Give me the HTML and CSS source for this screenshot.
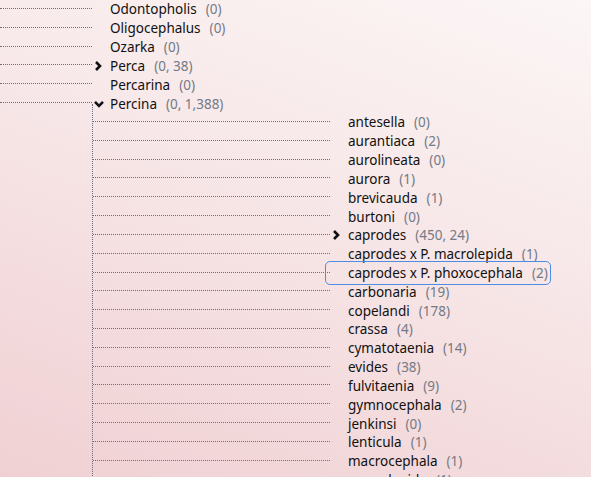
FILE: index.html
```html
<!DOCTYPE html>
<html lang="en">
<head>
    <meta charset="UTF-8">
    <title>Percidae</title>
    <link rel="stylesheet" href="styles.css">
</head>
<body>
    <ul class="tree">
        <li class="row"><span class="wire"></span><span class="node"><span class="toggle"></span><span class="name">Odontopholis</span><span class="count">(0)</span></span></li>
        <li class="row"><span class="wire"></span><span class="node"><span class="toggle"></span><span class="name">Oligocephalus</span><span class="count">(0)</span></span></li>
        <li class="row"><span class="wire"></span><span class="node"><span class="toggle"></span><span class="name">Ozarka</span><span class="count">(0)</span></span></li>
        <li class="row"><span class="wire"></span><span class="node"><span class="toggle"><svg width="12" height="10" viewBox="0 0 12 10"><path d="M4 1 L8 5 L4 9" /></svg></span><span class="name">Perca</span><span class="count">(0, 38)</span></span></li>
        <li class="row"><span class="wire"></span><span class="node"><span class="toggle"></span><span class="name">Percarina</span><span class="count">(0)</span></span></li>
        <li class="branch">
            <div class="row"><span class="wire"></span><span class="node"><span class="toggle"><svg width="14" height="10" viewBox="0 0 14 10"><path d="M3 2.8 L7 6.8 L11 2.8" /></svg></span><span class="name">Percina</span><span class="count">(0, 1,388)</span></span></div>
            <ul class="children">
                <li class="row"><span class="wire"></span><span class="node"><span class="toggle"></span><span class="name">antesella</span><span class="count">(0)</span></span></li>
                <li class="row"><span class="wire"></span><span class="node"><span class="toggle"></span><span class="name">aurantiaca</span><span class="count">(2)</span></span></li>
                <li class="row"><span class="wire"></span><span class="node"><span class="toggle"></span><span class="name">aurolineata</span><span class="count">(0)</span></span></li>
                <li class="row"><span class="wire"></span><span class="node"><span class="toggle"></span><span class="name">aurora</span><span class="count">(1)</span></span></li>
                <li class="row"><span class="wire"></span><span class="node"><span class="toggle"></span><span class="name">brevicauda</span><span class="count">(1)</span></span></li>
                <li class="row"><span class="wire"></span><span class="node"><span class="toggle"></span><span class="name">burtoni</span><span class="count">(0)</span></span></li>
                <li class="row"><span class="wire"></span><span class="node"><span class="toggle"><svg width="12" height="10" viewBox="0 0 12 10"><path d="M4 1 L8 5 L4 9" /></svg></span><span class="name">caprodes</span><span class="count">(450, 24)</span></span></li>
                <li class="row"><span class="wire"></span><span class="node"><span class="toggle"></span><span class="name">caprodes x P. macrolepida</span><span class="count">(1)</span></span></li>
                <li class="row"><span class="wire"></span><span class="node selected"><span class="toggle"></span><span class="name">caprodes x P. phoxocephala</span><span class="count">(2)</span></span></li>
                <li class="row"><span class="wire"></span><span class="node"><span class="toggle"></span><span class="name">carbonaria</span><span class="count">(19)</span></span></li>
                <li class="row"><span class="wire"></span><span class="node"><span class="toggle"></span><span class="name">copelandi</span><span class="count">(178)</span></span></li>
                <li class="row"><span class="wire"></span><span class="node"><span class="toggle"></span><span class="name">crassa</span><span class="count">(4)</span></span></li>
                <li class="row"><span class="wire"></span><span class="node"><span class="toggle"></span><span class="name">cymatotaenia</span><span class="count">(14)</span></span></li>
                <li class="row"><span class="wire"></span><span class="node"><span class="toggle"></span><span class="name">evides</span><span class="count">(38)</span></span></li>
                <li class="row"><span class="wire"></span><span class="node"><span class="toggle"></span><span class="name">fulvitaenia</span><span class="count">(9)</span></span></li>
                <li class="row"><span class="wire"></span><span class="node"><span class="toggle"></span><span class="name">gymnocephala</span><span class="count">(2)</span></span></li>
                <li class="row"><span class="wire"></span><span class="node"><span class="toggle"></span><span class="name">jenkinsi</span><span class="count">(0)</span></span></li>
                <li class="row"><span class="wire"></span><span class="node"><span class="toggle"></span><span class="name">lenticula</span><span class="count">(1)</span></span></li>
                <li class="row"><span class="wire"></span><span class="node"><span class="toggle"></span><span class="name">macrocephala</span><span class="count">(1)</span></span></li>
                <li class="row"><span class="wire"></span><span class="node"><span class="toggle"></span><span class="name">macrolepida</span><span class="count">(1)</span></span></li>
                <li class="row"><span class="wire"></span><span class="node"><span class="toggle"></span><span class="name">maculata</span><span class="count">(12)</span></span></li>
            </ul>
        </li>
    </ul>
</body>
</html>
```

FILE: styles.css
```css
* {
    margin: 0;
    padding: 0;
    box-sizing: border-box;
}

html, body {
    height: 100%;
    overflow: hidden;
}

body {
    font-family: 'Noto Sans', 'Open Sans', sans-serif;
    font-size: 13.5px;
    color: #111;
    background: linear-gradient(200deg, #fcf6f6 0%, #f7e6e7 45%, #f0d0d3 100%);
}

.tree {
    list-style: none;
}

.row {
    display: flex;
    align-items: center;
    height: 18.83px;
}

.wire {
    flex: none;
    width: 92px;
    height: 0;
    border-top: 1px dotted #6e6e7c;
    margin-top: -2px;
}

.node {
    position: relative;
    display: flex;
    align-items: center;
    white-space: nowrap;
}

.toggle {
    flex: none;
    width: 18px;
    display: flex;
    align-items: center;
}

.toggle svg {
    fill: none;
    stroke: #111;
    stroke-width: 2.6;
}

.count {
    color: #747a86;
    margin-left: 9px;
}

.selected::after {
    content: '';
    position: absolute;
    left: -5px;
    right: -3px;
    top: -3px;
    bottom: -3px;
    border: 1px solid #4c8ee6;
    border-radius: 5px;
}

.children {
    list-style: none;
    margin-left: 92px;
    margin-top: -9px;
    padding-top: 9px;
    border-left: 1px dotted #6e6e7c;
}

.children .wire {
    width: 237px;
}
```
